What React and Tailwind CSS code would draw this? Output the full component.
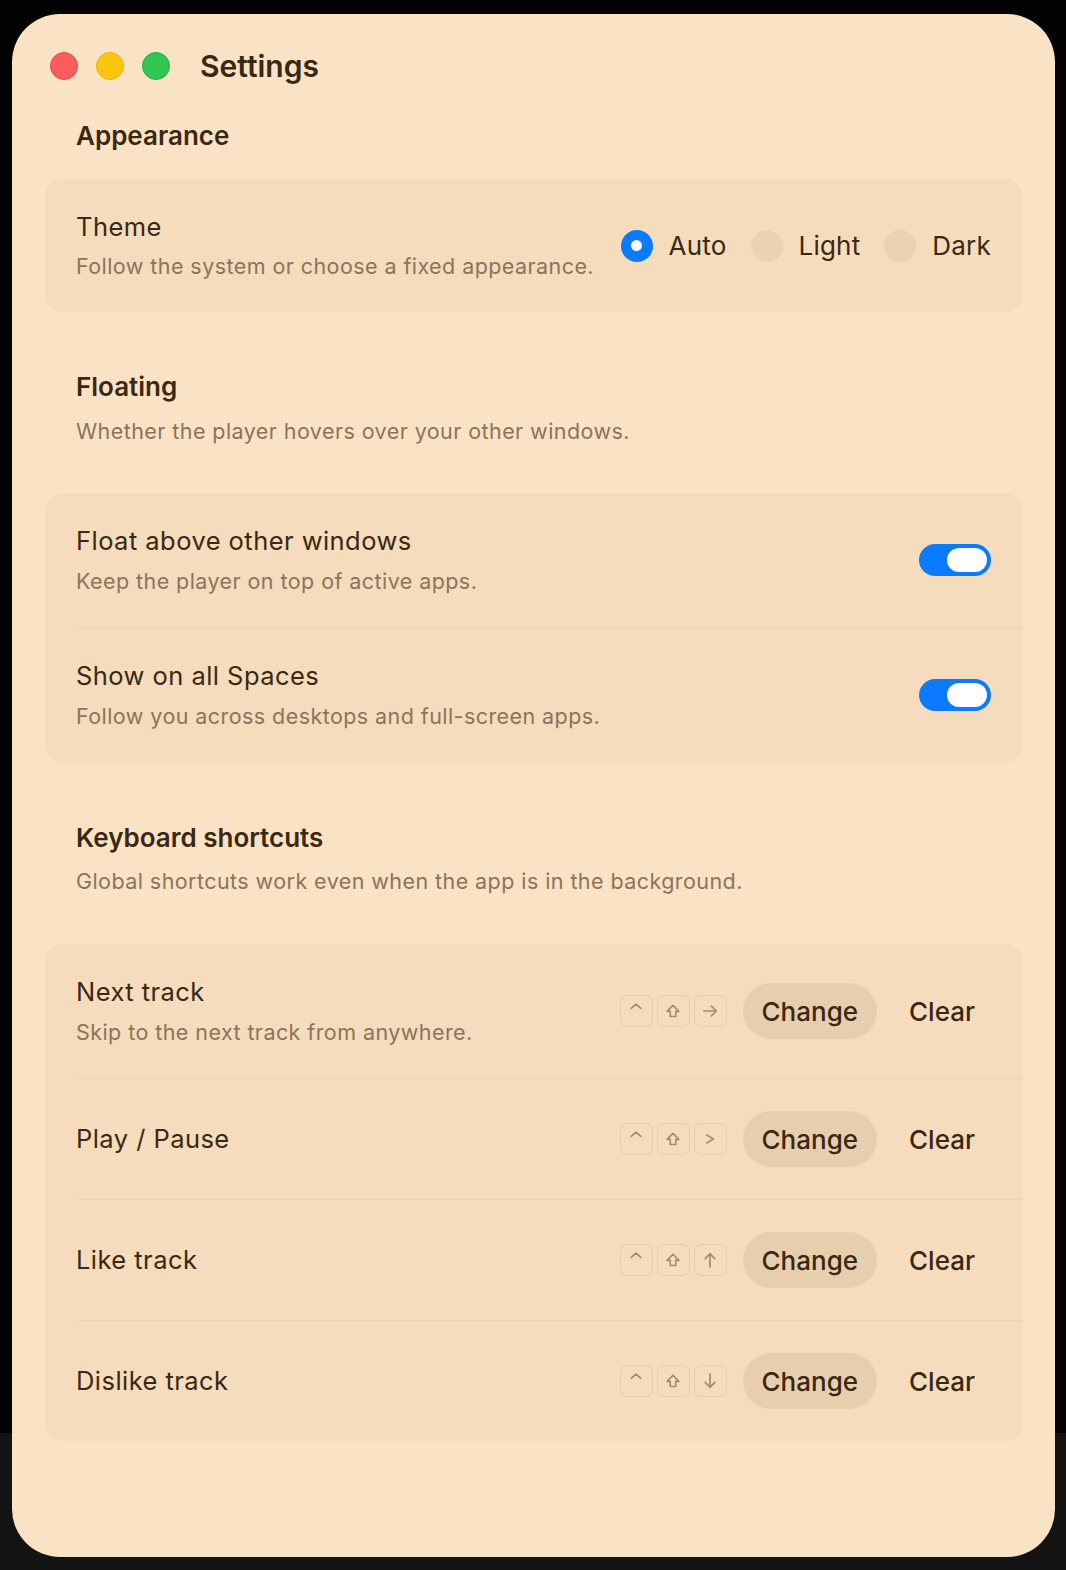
import React from "react";

const Key = ({ children }) => (
  <div className="w-[33px] h-[32px] rounded-[7px] border-[1.5px] border-[#e8cdaa] flex items-center justify-center text-[#a38a6e]">
    {children}
  </div>
);

const Caret = () => (
  <svg width="22" height="22" viewBox="0 0 16 16" fill="none" stroke="currentColor" strokeWidth="1.2" strokeLinecap="round" strokeLinejoin="round" className="-mt-[5px]">
    <polyline points="4.5,7.5 8,4.5 11.5,7.5" />
  </svg>
);
const Shift = () => (
  <svg width="22" height="22" viewBox="0 0 16 16" fill="none" stroke="currentColor" strokeWidth="1.15" strokeLinejoin="round">
    <path d="M8 3.8 L12.3 8.3 H10 V12 H6 V8.3 H3.7 Z" />
  </svg>
);
const ArrowR = () => (
  <svg width="22" height="22" viewBox="0 0 16 16" fill="none" stroke="currentColor" strokeWidth="1.2" strokeLinecap="round" strokeLinejoin="round">
    <line x1="3.5" y1="8" x2="12.5" y2="8" />
    <polyline points="9,4.5 12.5,8 9,11.5" />
  </svg>
);
const Chev = () => (
  <svg width="22" height="22" viewBox="0 0 16 16" fill="none" stroke="currentColor" strokeWidth="1.2" strokeLinecap="round" strokeLinejoin="round">
    <polyline points="5.5,5 10.5,8 5.5,11" />
  </svg>
);
const ArrowU = () => (
  <svg width="22" height="22" viewBox="0 0 16 16" fill="none" stroke="currentColor" strokeWidth="1.2" strokeLinecap="round" strokeLinejoin="round">
    <line x1="8" y1="3.5" x2="8" y2="13" />
    <polyline points="4.5,7 8,3.5 11.5,7" />
  </svg>
);
const ArrowD = () => (
  <svg width="22" height="22" viewBox="0 0 16 16" fill="none" stroke="currentColor" strokeWidth="1.2" strokeLinecap="round" strokeLinejoin="round">
    <line x1="8" y1="3" x2="8" y2="12.5" />
    <polyline points="4.5,9 8,12.5 11.5,9" />
  </svg>
);

const Toggle = () => (
  <div className="w-[72px] h-[32px] rounded-full bg-[#0a7bff] flex items-center justify-end pr-[4px]">
    <div className="w-[40px] h-[24px] rounded-full bg-white" />
  </div>
);

const Radio = ({ label, on }) => (
  <div className="flex items-center gap-4">
    {on ? (
      <div className="w-[32px] h-[32px] rounded-full bg-[#0a7bff] flex items-center justify-center">
        <div className="w-[11px] h-[11px] rounded-full bg-white" />
      </div>
    ) : (
      <div className="w-[32px] h-[32px] rounded-full bg-[#ead2b2]" />
    )}
    <span className="text-[26px] leading-[32px] text-[#3b2813] tracking-[0.2px]">{label}</span>
  </div>
);

const Title = ({ children }) => (
  <div className="text-[25.5px] leading-[32px] text-[#3b2813] tracking-[0.45px]">{children}</div>
);
const Sub = ({ children }) => (
  <div className="text-[21.5px] leading-[28px] text-[#8b745a] tracking-[0.43px] mt-[10px]">{children}</div>
);

const Shortcut = ({ keys }) => (
  <div className="flex items-center gap-4">
    <div className="flex items-center gap-[4px]">
      <Key><Caret /></Key>
      <Key><Shift /></Key>
      <Key>{keys}</Key>
    </div>
    <button className="h-[56px] px-[19px] rounded-full bg-[#e7cfae] text-[26px] font-medium text-[#3b2813]">Change</button>
    <button className="h-[56px] px-4 rounded-full text-[26px] font-medium text-[#3b2813]">Clear</button>
  </div>
);

const Row = ({ title, sub, right, last }) => (
  <div className="pl-[31px]">
    <div className={`flex items-center justify-between pr-8 py-8 ${last ? "" : "border-b border-[#ecd4b4]"}`}>
      <div>
        <Title>{title}</Title>
        {sub && <Sub>{sub}</Sub>}
      </div>
      {right}
    </div>
  </div>
);

export default function App() {
  return (
    <div
      className="w-[1066px] h-[1570px] pt-[14px] pl-[12px] bg-[linear-gradient(to_bottom,#030303_1433px,#131313_1433px)]"
      style={{ fontFamily: "Inter, 'Noto Sans', sans-serif" }}
    >
      <div className="w-[1043px] h-[1543px] rounded-[48px] bg-[#f9e3c4] overflow-hidden pl-[33px] pr-[32px]">
        {/* header */}
        <div className="flex items-center h-[28px] mt-[38px] pl-[5px]">
          <div className="w-[28px] h-[28px] rounded-full bg-[#fb5c5c] border border-[#e94a4e]" />
          <div className="w-[28px] h-[28px] rounded-full bg-[#fbc50c] border border-[#e9b208] ml-[18px]" />
          <div className="w-[28px] h-[28px] rounded-full bg-[#31c552] border border-[#27ad45] ml-[18px]" />
          <div className="ml-[30px] text-[30px] leading-[36px] font-semibold text-[#3b2813]">Settings</div>
        </div>

        {/* Appearance */}
        <div className="pl-[31px] mt-[40px] text-[26px] leading-[32px] font-semibold text-[#3b2813]">Appearance</div>
        <div className="mt-[27px] rounded-[18px] bg-[#f4dcbc]">
          <div className="pl-[31px] pr-8 pt-8 pb-[32px] flex items-center justify-between">
            <div>
              <Title>Theme</Title>
              <div className="text-[21.5px] leading-[28px] text-[#8b745a] tracking-[0.43px] mt-[9px]">Follow the system or choose a fixed appearance.</div>
            </div>
            <div className="flex items-center gap-[24px]">
              <Radio label="Auto" on />
              <Radio label="Light" />
              <Radio label="Dark" />
            </div>
          </div>
        </div>

        {/* Floating */}
        <div className="pl-[31px] mt-[59px] text-[26px] leading-[32px] font-semibold text-[#3b2813]">Floating</div>
        <div className="pl-[31px] mt-[14px] text-[21.5px] leading-[28px] text-[#8b745a] tracking-[0.43px]">Whether the player hovers over your other windows.</div>
        <div className="mt-[48px] rounded-[18px] bg-[#f4dcbc]">
          <Row title="Float above other windows" sub="Keep the player on top of active apps." right={<Toggle />} />
          <Row title="Show on all Spaces" sub="Follow you across desktops and full-screen apps." right={<Toggle />} last />
        </div>

        {/* Keyboard shortcuts */}
        <div className="pl-[31px] mt-[60px] text-[26px] leading-[32px] font-semibold text-[#3b2813]">Keyboard shortcuts</div>
        <div className="pl-[31px] mt-[13px] text-[21.5px] leading-[28px] text-[#8b745a] tracking-[0.43px]">Global shortcuts work even when the app is in the background.</div>
        <div className="mt-[49px] rounded-[18px] bg-[#f4dcbc]">
          <Row title="Next track" sub="Skip to the next track from anywhere." right={<Shortcut keys={<ArrowR />} />} />
          <Row title="Play / Pause" right={<Shortcut keys={<Chev />} />} />
          <Row title="Like track" right={<Shortcut keys={<ArrowU />} />} />
          <Row title="Dislike track" right={<Shortcut keys={<ArrowD />} />} last />
        </div>
      </div>
    </div>
  );
}
